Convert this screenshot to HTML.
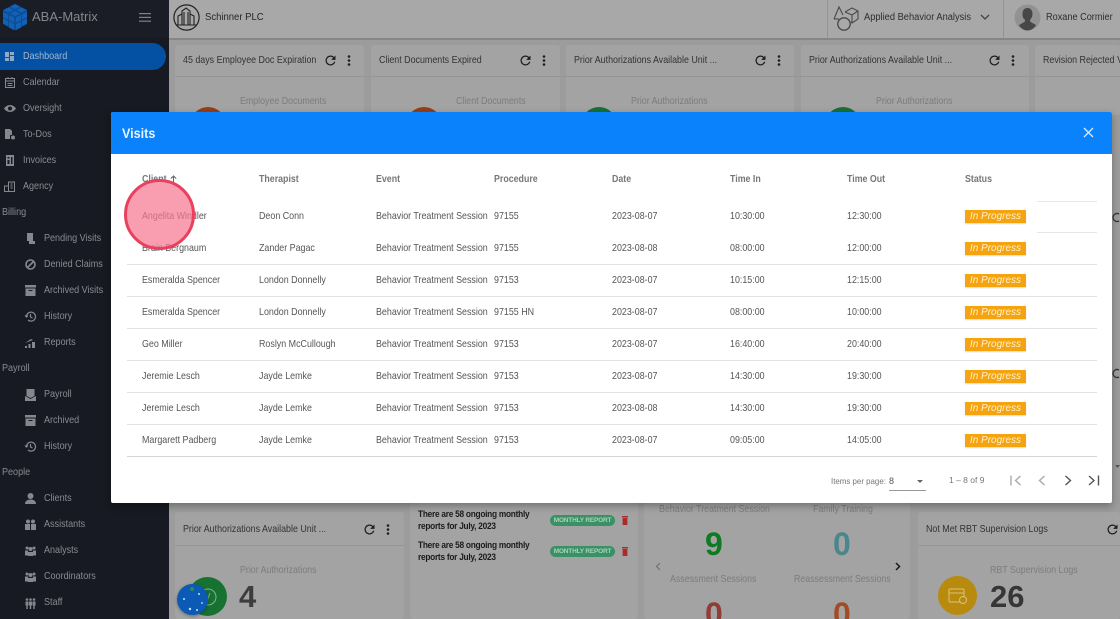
<!DOCTYPE html>
<html><head><meta charset="utf-8"><title>Visits</title>
<style>
html,body{margin:0;padding:0;width:1120px;height:619px;overflow:hidden;background:#9c9c9c}
body{font-family:"Liberation Sans",sans-serif}
#p{position:absolute;left:0;top:0;width:1120px;height:619px;overflow:hidden;background:#9c9c9c}
.t{position:absolute;white-space:nowrap;line-height:14px;margin-top:-6.5px;transform-origin:0 50%}
.abs{position:absolute}
.nav{font-size:10.4px;color:#888b92;transform:scaleX(.87)}
.card{position:absolute;background:#a3a3a3;border-radius:3px}
.hd{font-size:10.4px;color:#333;transform:scaleX(.855)}
.lab{font-size:10.4px;color:#7c7c7c;transform:scaleX(.85)}
.r{font-size:10.4px;color:#555;transform:scaleX(.856)}
.h{font-size:10.4px;color:#777;font-weight:bold;transform:scaleX(.85)}
.n{font-size:32px;line-height:30px;margin-top:-14.5px;font-weight:bold}
.m{font-size:9.5px;font-weight:bold;color:#1b1b1b;transform:scaleX(.875);letter-spacing:-.3px}
.b{position:absolute;left:965px;width:61px;height:13px;background:#f5a30f;color:#fff2cf;font-size:10px;font-style:italic;line-height:13px;text-align:center;box-shadow:0 1px 1px rgba(0,0,0,.15)}
.l{position:absolute;left:127px;width:970px;height:1px;background:#e2e2e2}
.pill{position:absolute;left:550px;width:65px;height:11px;border-radius:6px;background:#3a9166;color:#a9d2bb;font-size:6.5px;font-weight:bold;line-height:11px;text-align:center;letter-spacing:-.2px}
svg{position:absolute;overflow:visible}
</style></head><body><div id="p">

<!-- background top bar -->
<div class="abs" style="left:169px;top:0;width:951px;height:38px;background:#a8a8a8;border-bottom:2px solid #868686"></div>
<div class="abs" style="left:827px;top:0;width:1px;height:38px;background:#929292"></div>
<div class="abs" style="left:1003px;top:0;width:1px;height:38px;background:#929292"></div>

<svg style="left:173px;top:4px" width="27" height="27" viewBox="0 0 27 27" fill="none" stroke="#222">
<circle cx="13.5" cy="13.5" r="12.6" stroke-width="1.2"/>
<path d="M5 21V12l4-2v11M9 21V7l4-3 4 3v14M17 21V10l4 2v9M11 8v13M15 8v13M3 21h21" stroke-width="1.1"/>
</svg>
<div class="t" style="left:205px;top:17px;font-size:10px;color:#262626;transform:scaleX(.95)">Schinner PLC</div>

<svg style="left:833px;top:4px" width="27" height="27" viewBox="0 0 27 27" fill="none" stroke="#4a4a4a" stroke-width="1.1">
<path d="M1 15 6 3l4 8"/><path d="M1 15h5"/>
<circle cx="11" cy="20" r="6.2" stroke-width="1.4"/>
<path d="M12 8l7-4 6 3v8l-6 4-1-1M12 8l7 3 6-4M19 11v8"/>
</svg>
<div class="t" style="left:864px;top:17px;font-size:10px;color:#2e2e2e;transform:scaleX(.93)">Applied Behavior Analysis</div>
<svg style="left:980px;top:14px" width="10" height="7" viewBox="0 0 10 7" fill="none" stroke="#444" stroke-width="1.3"><path d="M1 1l4 4 4-4"/></svg>

<svg style="left:1014px;top:4px" width="27" height="27" viewBox="0 0 27 27">
<circle cx="13.5" cy="13.5" r="13" fill="#929292"/>
<path d="M13.5 4c3.500 0 5 2.600 5 6 0 2.500-1 4.500-2.400 5.600v2l6 3.500c-2 3-5 5.400-8.600 5.400s-6.600-2.400-8.600-5.400l6-3.500v-2C9 14.500 8.500 12.500 8.500 10c0-3.400 1.500-6 5-6z" fill="#474747"/>
</svg>
<div class="t" style="left:1046px;top:17px;font-size:10px;color:#2e2e2e;transform:scaleX(.915)">Roxane Cormier</div>

<!-- top cards -->
<div class="card" style="left:175px;top:45px;width:189px;height:70px"></div>
<div class="card" style="left:371px;top:45px;width:189px;height:70px"></div>
<div class="card" style="left:566px;top:45px;width:228px;height:70px"></div>
<div class="card" style="left:801px;top:45px;width:228px;height:70px"></div>
<div class="card" style="left:1035px;top:45px;width:85px;height:70px"></div>
<div class="abs" style="left:175px;top:76px;width:945px;height:1px;background:#959595"></div>

<div class="t hd" style="left:183px;top:60px">45 days Employee Doc Expiration</div>
<div class="t hd" style="left:379px;top:60px">Client Documents Expired</div>
<div class="t hd" style="left:574px;top:60px">Prior Authorizations Available Unit ...</div>
<div class="t hd" style="left:809px;top:60px">Prior Authorizations Available Unit ...</div>
<div class="t hd" style="left:1043px;top:60px">Revision Rejected V</div>

<!-- refresh + menu icons -->
<svg style="left:322.5px;top:52.5px" width="15" height="15" viewBox="0 0 24 24"><path fill="#1e1e1e" d="M17.650 6.350A8 8 0 1 0 19.730 14h-2.080A6 6 0 1 1 12 6c1.660 0 3.140.690 4.220 1.780L13 11h7V4z"/></svg>
<svg style="left:517.5px;top:52.5px" width="15" height="15" viewBox="0 0 24 24"><path fill="#1e1e1e" d="M17.650 6.350A8 8 0 1 0 19.730 14h-2.080A6 6 0 1 1 12 6c1.660 0 3.140.690 4.220 1.780L13 11h7V4z"/></svg>
<svg style="left:752.5px;top:52.5px" width="15" height="15" viewBox="0 0 24 24"><path fill="#1e1e1e" d="M17.650 6.350A8 8 0 1 0 19.730 14h-2.080A6 6 0 1 1 12 6c1.660 0 3.140.690 4.220 1.780L13 11h7V4z"/></svg>
<svg style="left:987px;top:52.5px" width="15" height="15" viewBox="0 0 24 24"><path fill="#1e1e1e" d="M17.650 6.350A8 8 0 1 0 19.730 14h-2.080A6 6 0 1 1 12 6c1.660 0 3.140.690 4.220 1.780L13 11h7V4z"/></svg>
<svg style="left:347px;top:55px" width="4" height="11" fill="#1e1e1e"><circle cx="2" cy="1.500" r="1.300"/><circle cx="2" cy="5.500" r="1.300"/><circle cx="2" cy="9.500" r="1.300"/></svg>
<svg style="left:542px;top:55px" width="4" height="11" fill="#1e1e1e"><circle cx="2" cy="1.500" r="1.300"/><circle cx="2" cy="5.500" r="1.300"/><circle cx="2" cy="9.500" r="1.300"/></svg>
<svg style="left:777px;top:55px" width="4" height="11" fill="#1e1e1e"><circle cx="2" cy="1.500" r="1.300"/><circle cx="2" cy="5.500" r="1.300"/><circle cx="2" cy="9.500" r="1.300"/></svg>
<svg style="left:1011px;top:55px" width="4" height="11" fill="#1e1e1e"><circle cx="2" cy="1.500" r="1.300"/><circle cx="2" cy="5.500" r="1.300"/><circle cx="2" cy="9.500" r="1.300"/></svg>

<div class="t lab" style="left:240px;top:101px">Employee Documents</div>
<div class="t lab" style="left:456px;top:101px">Client Documents</div>
<div class="t lab" style="left:631px;top:101px">Prior Authorizations</div>
<div class="t lab" style="left:876px;top:101px">Prior Authorizations</div>
<div class="abs" style="left:190px;top:107px;width:36px;height:36px;border-radius:50%;background:#963d17"></div>
<div class="abs" style="left:406px;top:107px;width:36px;height:36px;border-radius:50%;background:#963d17"></div>
<div class="abs" style="left:581px;top:107px;width:36px;height:36px;border-radius:50%;background:#177035"></div>
<div class="abs" style="left:825px;top:107px;width:36px;height:36px;border-radius:50%;background:#177035"></div>

<!-- bottom cards -->
<div class="card" style="left:175px;top:512px;width:229px;height:107px"></div>
<div class="abs" style="left:175px;top:545px;width:229px;height:1px;background:#959595"></div>
<div class="t hd" style="left:183px;top:529px">Prior Authorizations Available Unit ...</div>
<svg style="left:361.5px;top:521.5px" width="15" height="15" viewBox="0 0 24 24"><path fill="#1e1e1e" d="M17.650 6.350A8 8 0 1 0 19.730 14h-2.080A6 6 0 1 1 12 6c1.660 0 3.140.690 4.220 1.780L13 11h7V4z"/></svg>
<svg style="left:386px;top:524px" width="4" height="11" fill="#1e1e1e"><circle cx="2" cy="1.500" r="1.300"/><circle cx="2" cy="5.500" r="1.300"/><circle cx="2" cy="9.500" r="1.300"/></svg>
<div class="t lab" style="left:240px;top:570px">Prior Authorizations</div>
<div class="t" style="left:239px;top:597px;font-size:31px;font-weight:bold;color:#3d3d3d;margin-top:-7px">4</div>
<div class="abs" style="left:188px;top:577px;width:39px;height:39px;border-radius:50%;background:#177232"></div>
<svg style="left:197px;top:586px" width="22" height="22" fill="none" stroke="#7fb58f"><circle cx="11" cy="11" r="8"/><path d="M13 7l-3 8"/></svg>
<div class="abs" style="left:177px;top:584px;width:31px;height:31px;border-radius:50%;background:#0b5ab6;box-shadow:0 1px 3px rgba(0,0,0,.35)"></div>
<svg style="left:177px;top:584px" width="31" height="31" fill="#cfe0f5"><circle cx="7" cy="15" r="1"/><circle cx="13" cy="25" r="1.200"/><circle cx="20" cy="26" r="1"/><circle cx="22" cy="10" r="1"/><circle cx="25" cy="19" r=".9"/><circle cx="15" cy="5" r="2" fill="#2d8a55"/></svg>

<div class="card" style="left:410px;top:503px;width:228px;height:116px"></div>
<div class="t m" style="left:418px;top:514px">There are 58 ongoing monthly</div>
<div class="t m" style="left:418px;top:526px">reports for July, 2023</div>
<div class="t m" style="left:418px;top:545px">There are 58 ongoing monthly</div>
<div class="t m" style="left:418px;top:557px">reports for July, 2023</div>
<div class="pill" style="top:515px">MONTHLY REPORT</div>
<div class="pill" style="top:546px">MONTHLY REPORT</div>
<svg style="left:622px;top:516px" width="6" height="9" fill="#a82c2c"><path d="M0 0h6v1.500H0zM.6 2h4.800v7H.6z"/></svg>
<svg style="left:622px;top:547px" width="6" height="9" fill="#a82c2c"><path d="M0 0h6v1.500H0zM.6 2h4.800v7H.6z"/></svg>

<div class="card" style="left:644px;top:503px;width:266px;height:116px"></div>
<div class="t lab" style="left:659px;top:509px">Behavior Treatment Session</div>
<div class="t lab" style="left:813px;top:509px">Family Training</div>
<div class="t n" style="left:705px;top:543px;color:#0f7a23">9</div>
<div class="t n" style="left:833px;top:543px;color:#4b868b">0</div>
<div class="t lab" style="left:670px;top:579px">Assessment Sessions</div>
<div class="t lab" style="left:794px;top:579px">Reassessment Sessions</div>
<div class="t n" style="left:705px;top:613px;color:#8f3d36">0</div>
<div class="t n" style="left:833px;top:613px;color:#a34b25">0</div>
<svg style="left:655px;top:562px" width="6" height="9" fill="none" stroke="#707070" stroke-width="1.200"><path d="M5 1 1.500 4.500 5 8"/></svg>
<svg style="left:895px;top:562px" width="6" height="9" fill="none" stroke="#1a1a1a" stroke-width="1.500"><path d="M1 1l3.500 3.500L1 8"/></svg>

<div class="card" style="left:918px;top:512px;width:202px;height:107px"></div>
<div class="abs" style="left:918px;top:545px;width:202px;height:1px;background:#959595"></div>
<div class="t hd" style="left:926px;top:529px">Not Met RBT Supervision Logs</div>
<svg style="left:1104.5px;top:521.5px" width="15" height="15" viewBox="0 0 24 24"><path fill="#1e1e1e" d="M17.650 6.350A8 8 0 1 0 19.730 14h-2.080A6 6 0 1 1 12 6c1.660 0 3.140.690 4.220 1.780L13 11h7V4z"/></svg>
<div class="t lab" style="left:990px;top:570px">RBT Supervision Logs</div>
<div class="t" style="left:990px;top:597px;font-size:31px;font-weight:bold;color:#363636;margin-top:-7px">26</div>
<div class="abs" style="left:938px;top:576px;width:39px;height:39px;border-radius:50%;background:#b88a0e"></div>
<svg style="left:948px;top:587px" width="20" height="18" fill="none" stroke="#dcc27a"><rect x="1" y="2" width="15" height="13" rx="1"/><path d="M1 6h15"/><circle cx="15" cy="13" r="3.500" fill="#b88a0e"/></svg>

<!-- sidebar -->
<div class="abs" style="left:0;top:0;width:169px;height:619px;background:#171a22"></div>
<div class="abs" style="left:0;top:0;width:169px;height:38px;background:#1a1d25"></div>
<svg style="left:3px;top:4px" width="24" height="27" viewBox="0 0 24 27" fill="#1261b6">
<path d="M12 0l12 6v14l-12 6.500L0 20V6z" fill="#0c4e98"/>
<path d="M12 0l5 2.500-5 2.500-5-2.500zM5.500 3.500l5 2.500-5 2.500-5-2.500zM18.500 3.500l5 2.500-5 2.500-5-2.500zM12 7l5 2.500L12 12 7 9.500z"/>
<path d="M0 8l5 2.500v5L0 13zM6 11l5 2.500v5L6 16zM13 13.500l5-2.500v5l-5 2.500zM19 10.500l5-2.500v5l-5 2.500zM0 14.500l5 2.500v5l-5-2.500zM6 17.500l5 2.500v6l-5-2.500zM13 20l5-2.500v6L13 26zM19 17l5-2.500v5L19 22z"/>
</svg>
<div class="t" style="left:32px;top:17px;font-size:13px;color:#84878e;margin-top:-7px">ABA-Matrix</div>
<svg style="left:139px;top:13px" width="12" height="9" fill="#7f8288"><rect width="12" height="1.200"/><rect y="3.800" width="12" height="1.200"/><rect y="7.600" width="12" height="1.200"/></svg>

<div class="abs" style="left:0;top:43px;width:165.500px;height:27px;background:#0450a3;border-radius:0 14px 14px 0"></div>
<svg style="left:5px;top:52px" width="9" height="9" fill="#8fa9c9"><rect width="4" height="5"/><rect x="5" width="4" height="3"/><rect y="6" width="4" height="3"/><rect x="5" y="4" width="4" height="5"/></svg>
<div class="t nav" style="left:23px;top:56px;color:#a4b7cf">Dashboard</div>

<svg style="left:5px;top:77px" width="10" height="11" fill="none" stroke="#85888e"><rect x=".5" y="1.500" width="9" height="9"/><path d="M.5 4h9M3 0v2M7 0v2M2.500 6.500h5M2.500 8.500h5"/></svg>
<div class="t nav" style="left:23px;top:82px">Calendar</div>

<svg style="left:4px;top:105px" width="12" height="7" fill="#85888e"><path d="M6 0c3 0 5 2 6 3.500C11 5 9 7 6 7S1 5 0 3.500C1 2 3 0 6 0zm0 1.500a2 2 0 1 0 0 4 2 2 0 0 0 0-4z"/></svg>
<div class="t nav" style="left:23px;top:108px">Oversight</div>

<svg style="left:5px;top:129px" width="10" height="11" fill="#85888e"><path d="M0 0h5l2 2v4H5v4H0z"/><circle cx="8" cy="8.500" r="2"/></svg>
<div class="t nav" style="left:23px;top:134px">To-Dos</div>

<svg style="left:6px;top:155px" width="8" height="11" fill="#85888e"><path d="M0 0h8v11H0zM1.500 2v1.500h2V2zM5 2v7h1.500V2zM1.500 5v4h2V5z" fill-rule="evenodd"/></svg>
<div class="t nav" style="left:23px;top:160px">Invoices</div>

<svg style="left:4px;top:181px" width="11" height="11" fill="none" stroke="#85888e"><path d="M.5 5h4v5.500h-4zM4.500 1h6v9.500h-6zM6.500 3h2M6.500 5h2M6.500 7h2"/></svg>
<div class="t nav" style="left:23px;top:186px">Agency</div>

<div class="t nav" style="left:2px;top:212px">Billing</div>
<svg style="left:26px;top:233px" width="9" height="11" fill="#85888e"><path d="M1 0h6v8H1z"/><path d="M3 8h6v3H3z"/></svg>
<div class="t nav" style="left:44px;top:238.500px">Pending Visits</div>
<svg style="left:25px;top:259px" width="11" height="11" fill="none" stroke="#85888e" stroke-width="1.600"><circle cx="5.500" cy="5.500" r="4.500"/><path d="M2.500 8.500l6-6"/></svg>
<div class="t nav" style="left:44px;top:264.500px">Denied Claims</div>
<svg style="left:25px;top:285px" width="11" height="11" fill="#85888e"><path d="M0 0h11v2.500H0zM.5 3.500h10V11H.5zM3.500 5v1h4V5z" fill-rule="evenodd"/></svg>
<div class="t nav" style="left:44px;top:290.500px">Archived Visits</div>
<svg style="left:25px;top:311px" width="11" height="11" fill="none" stroke="#85888e" stroke-width="1.200"><path d="M1.500 5.500a4.500 4.500 0 1 1 1.500 3.500M0 4.500l1.500 1.500L3 4.500M5.500 3v3l2 1"/></svg>
<div class="t nav" style="left:44px;top:316.500px">History</div>
<svg style="left:25px;top:337px" width="11" height="11" fill="#85888e"><path d="M0 9h2v2H0zM3.500 7h2v4h-2zM7 5h3v6H7zM0 6l6-4 2 1"/></svg>
<div class="t nav" style="left:44px;top:342.500px">Reports</div>

<div class="t nav" style="left:2px;top:368.500px">Payroll</div>
<svg style="left:25px;top:389px" width="11" height="12" fill="#85888e"><path d="M1.500 0h8v7l-4 2-4-2zM0 7l5.500 3L11 7v5H0z"/></svg>
<div class="t nav" style="left:44px;top:394.500px">Payroll</div>
<svg style="left:25px;top:415px" width="11" height="11" fill="#85888e"><path d="M0 0h11v2.500H0zM.5 3.500h10V11H.5zM3.500 5v1h4V5z" fill-rule="evenodd"/></svg>
<div class="t nav" style="left:44px;top:420.500px">Archived</div>
<svg style="left:25px;top:441px" width="11" height="11" fill="none" stroke="#85888e" stroke-width="1.200"><path d="M1.500 5.500a4.500 4.500 0 1 1 1.500 3.500M0 4.500l1.500 1.500L3 4.500M5.500 3v3l2 1"/></svg>
<div class="t nav" style="left:44px;top:446.500px">History</div>

<div class="t nav" style="left:2px;top:472.500px">People</div>
<svg style="left:25px;top:493px" width="11" height="11" fill="#85888e"><circle cx="5.500" cy="3" r="3"/><path d="M0 11c0-3 2.500-4.500 5.500-4.500S11 8 11 11z"/></svg>
<div class="t nav" style="left:44px;top:498.500px">Clients</div>
<svg style="left:25px;top:519px" width="11" height="11" fill="#85888e"><circle cx="3" cy="2.500" r="2"/><circle cx="8" cy="2.500" r="2"/><path d="M0 5h5v6H0zM6 5h5v6H6z"/></svg>
<div class="t nav" style="left:44px;top:524.500px">Assistants</div>
<svg style="left:25px;top:546px" width="11" height="10" fill="#85888e"><circle cx="5.500" cy="3" r="2"/><circle cx="2" cy="2" r="1.500"/><circle cx="9" cy="2" r="1.500"/><path d="M0 4.500h3l.5 5H0zM8 4.500h3V9.500H7.500zM3 6h5v4H3z"/></svg>
<div class="t nav" style="left:44px;top:550.500px">Analysts</div>
<svg style="left:25px;top:572px" width="11" height="10" fill="#85888e"><circle cx="5.500" cy="3" r="2"/><circle cx="2" cy="2" r="1.500"/><circle cx="9" cy="2" r="1.500"/><path d="M0 4.500h3l.5 5H0zM8 4.500h3V9.500H7.500zM3 6h5v4H3z"/></svg>
<div class="t nav" style="left:44px;top:576.500px">Coordinators</div>
<svg style="left:25px;top:598px" width="11" height="11" fill="#85888e"><circle cx="2" cy="1.500" r="1.300"/><circle cx="5.500" cy="1.500" r="1.300"/><circle cx="9" cy="1.500" r="1.300"/><path d="M.5 3.500h3v4h-.8V11H1.300V7.500H.5zM4 3.500h3v4h-.8V11H4.800V7.500H4zM7.500 3.500h3v4h-.8V11H8.300V7.500h-.8z"/></svg>
<div class="t nav" style="left:44px;top:602.500px">Staff</div>

<!-- modal -->
<div class="abs" style="left:111px;top:112px;width:1001px;height:391px;background:#fff;border-radius:2px;box-shadow:0 3px 8px rgba(0,0,0,.3)"></div>
<div class="abs" style="left:111px;top:112px;width:1001px;height:41.500px;background:#0a82fb;border-radius:2px 2px 0 0"></div>
<div class="t" style="left:122px;top:133px;font-size:14px;font-weight:bold;color:#e8f3ff;margin-top:-7px;transform:scaleX(.9)">Visits</div>
<svg style="left:1083px;top:127px" width="11" height="11" fill="none" stroke="#d9ecff" stroke-width="1.300"><path d="M1 1l9 9M10 1l-9 9"/></svg>

<div class="t h" style="left:142px;top:179px">Client</div>
<svg style="left:170px;top:175px" width="7" height="8" fill="none" stroke="#666" stroke-width="1.100"><path d="M3.500 8V1M.8 3.500 3.500 1l2.700 2.500"/></svg>
<div class="t h" style="left:258.500px;top:179px">Therapist</div>
<div class="t h" style="left:376px;top:179px">Event</div>
<div class="t h" style="left:494px;top:179px">Procedure</div>
<div class="t h" style="left:612px;top:179px">Date</div>
<div class="t h" style="left:729.500px;top:179px">Time In</div>
<div class="t h" style="left:847px;top:179px">Time Out</div>
<div class="t h" style="left:965px;top:179px">Status</div>

<div class="abs" style="left:1037px;top:201px;width:60px;height:1px;background:#e6e6e6"></div>
<div class="abs" style="left:1037px;top:232px;width:60px;height:1px;background:#e6e6e6"></div>
<div class="l" style="top:264px"></div>
<div class="l" style="top:296px"></div>
<div class="l" style="top:328px"></div>
<div class="l" style="top:360px"></div>
<div class="l" style="top:392px"></div>
<div class="l" style="top:424px"></div>
<div class="l" style="top:456px;background:#d5d5d5"></div>

<div class="t r" style="left:142px;top:216px">Angelita Windler</div><div class="t r" style="left:258.500px;top:216px">Deon Conn</div><div class="t r" style="left:376px;top:216px">Behavior Treatment Session</div><div class="t r" style="left:494px;top:216px">97155</div><div class="t r" style="left:612px;top:216px">2023-08-07</div><div class="t r" style="left:729.500px;top:216px">10:30:00</div><div class="t r" style="left:847px;top:216px">12:30:00</div><div class="b" style="top:210px">In Progress</div>
<div class="t r" style="left:142px;top:248px">Brain Bergnaum</div><div class="t r" style="left:258.500px;top:248px">Zander Pagac</div><div class="t r" style="left:376px;top:248px">Behavior Treatment Session</div><div class="t r" style="left:494px;top:248px">97155</div><div class="t r" style="left:612px;top:248px">2023-08-08</div><div class="t r" style="left:729.500px;top:248px">08:00:00</div><div class="t r" style="left:847px;top:248px">12:00:00</div><div class="b" style="top:242px">In Progress</div>
<div class="t r" style="left:142px;top:280px">Esmeralda Spencer</div><div class="t r" style="left:258.500px;top:280px">London Donnelly</div><div class="t r" style="left:376px;top:280px">Behavior Treatment Session</div><div class="t r" style="left:494px;top:280px">97153</div><div class="t r" style="left:612px;top:280px">2023-08-07</div><div class="t r" style="left:729.500px;top:280px">10:15:00</div><div class="t r" style="left:847px;top:280px">12:15:00</div><div class="b" style="top:274px">In Progress</div>
<div class="t r" style="left:142px;top:312px">Esmeralda Spencer</div><div class="t r" style="left:258.500px;top:312px">London Donnelly</div><div class="t r" style="left:376px;top:312px">Behavior Treatment Session</div><div class="t r" style="left:494px;top:312px">97155 HN</div><div class="t r" style="left:612px;top:312px">2023-08-07</div><div class="t r" style="left:729.500px;top:312px">08:00:00</div><div class="t r" style="left:847px;top:312px">10:00:00</div><div class="b" style="top:306px">In Progress</div>
<div class="t r" style="left:142px;top:344px">Geo Miller</div><div class="t r" style="left:258.500px;top:344px">Roslyn McCullough</div><div class="t r" style="left:376px;top:344px">Behavior Treatment Session</div><div class="t r" style="left:494px;top:344px">97153</div><div class="t r" style="left:612px;top:344px">2023-08-07</div><div class="t r" style="left:729.500px;top:344px">16:40:00</div><div class="t r" style="left:847px;top:344px">20:40:00</div><div class="b" style="top:338px">In Progress</div>
<div class="t r" style="left:142px;top:376px">Jeremie Lesch</div><div class="t r" style="left:258.500px;top:376px">Jayde Lemke</div><div class="t r" style="left:376px;top:376px">Behavior Treatment Session</div><div class="t r" style="left:494px;top:376px">97153</div><div class="t r" style="left:612px;top:376px">2023-08-07</div><div class="t r" style="left:729.500px;top:376px">14:30:00</div><div class="t r" style="left:847px;top:376px">19:30:00</div><div class="b" style="top:370px">In Progress</div>
<div class="t r" style="left:142px;top:408px">Jeremie Lesch</div><div class="t r" style="left:258.500px;top:408px">Jayde Lemke</div><div class="t r" style="left:376px;top:408px">Behavior Treatment Session</div><div class="t r" style="left:494px;top:408px">97153</div><div class="t r" style="left:612px;top:408px">2023-08-08</div><div class="t r" style="left:729.500px;top:408px">14:30:00</div><div class="t r" style="left:847px;top:408px">19:30:00</div><div class="b" style="top:402px">In Progress</div>
<div class="t r" style="left:142px;top:440px">Margarett Padberg</div><div class="t r" style="left:258.500px;top:440px">Jayde Lemke</div><div class="t r" style="left:376px;top:440px">Behavior Treatment Session</div><div class="t r" style="left:494px;top:440px">97153</div><div class="t r" style="left:612px;top:440px">2023-08-07</div><div class="t r" style="left:729.500px;top:440px">09:05:00</div><div class="t r" style="left:847px;top:440px">14:05:00</div><div class="b" style="top:434px">In Progress</div>

<!-- paginator -->
<div class="t" style="left:831px;top:480px;font-size:8.500px;color:#777;transform:scaleX(.93)">Items per page:</div>
<div class="t" style="left:889px;top:480px;font-size:9px;color:#555">8</div>
<div class="abs" style="left:889px;top:490px;width:37px;height:1px;background:#999"></div>
<svg style="left:917px;top:480px" width="6" height="3" fill="#666"><path d="M0 0h6L3 3z"/></svg>
<div class="t" style="left:949px;top:479.500px;font-size:8.500px;color:#777">1 – 8 of 9</div>
<svg style="left:1010px;top:475px" width="12" height="11" fill="none" stroke="#aaa" stroke-width="1.400"><path d="M1 .5v10M10.500 1 5.500 5.500l5 4.500"/></svg>
<svg style="left:1038px;top:475px" width="8" height="11" fill="none" stroke="#aaa" stroke-width="1.400"><path d="M6.500 1 1.500 5.500l5 4.500"/></svg>
<svg style="left:1064px;top:475px" width="8" height="11" fill="none" stroke="#555" stroke-width="1.400"><path d="M1.500 1l5 4.500-5 4.500"/></svg>
<svg style="left:1088px;top:475px" width="12" height="11" fill="none" stroke="#555" stroke-width="1.400"><path d="M1 1l5 4.500L1 10M10.500.5v10"/></svg>

<svg style="left:1112px;top:212px" width="8" height="12" fill="none" stroke="#333" stroke-width="1.300"><path d="M7 2a4 4 0 1 0 0 7"/></svg>
<svg style="left:1112px;top:368px" width="8" height="12" fill="none" stroke="#333" stroke-width="1.300"><path d="M7 2a4 4 0 1 0 0 7"/></svg>
<svg style="left:1115px;top:465px" width="5" height="3" fill="#555"><path d="M0 0h5L2.500 3z"/></svg>

<!-- click highlight -->
<div class="abs" style="left:124px;top:179px;width:65px;height:65px;border:3px solid #e9405f;border-radius:50%;background:rgba(245,120,145,.72)"></div>

</div></body></html>
